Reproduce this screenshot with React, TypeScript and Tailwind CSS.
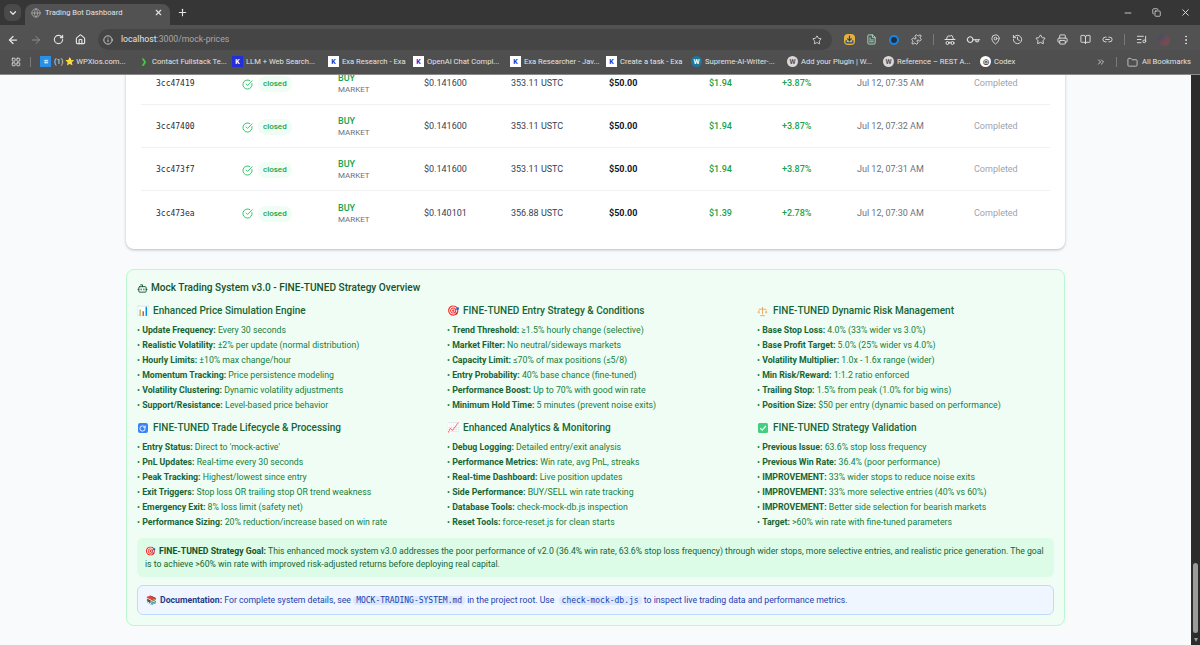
import type { ReactNode } from "react";
import { ArrowLeft, ArrowRight, RotateCw, Home, Info, Star, X, Plus, ChevronDown, Minus, Copy, LayoutGrid, Puzzle, Key, HatGlasses, MapPin, History, Printer, BookOpen, Link2, MoreVertical, ChevronsRight, Folder, CircleCheckBig, Bot, ListMusic, Globe, Download, FileText } from "lucide-react";

const trades = [
  { id: "3cc47419", price: "$0.141600", qty: "353.11 USTC", pnl: "$1.94", pct: "+3.87%", time: "Jul 12, 07:35 AM" },
  { id: "3cc47400", price: "$0.141600", qty: "353.11 USTC", pnl: "$1.94", pct: "+3.87%", time: "Jul 12, 07:32 AM" },
  { id: "3cc473f7", price: "$0.141600", qty: "353.11 USTC", pnl: "$1.94", pct: "+3.87%", time: "Jul 12, 07:31 AM" },
  { id: "3cc473ea", price: "$0.140101", qty: "356.88 USTC", pnl: "$1.39", pct: "+2.78%", time: "Jul 12, 07:30 AM" },
];

function ScaleIcon() {
  return (
    <svg viewBox="0 0 12 12" className="inline-block h-[11px] w-[11px] align-[-1px]">
      <path d="M6 1v8M3.5 10.5h5M2 3.5h8" stroke="#e8a55c" strokeWidth="1" fill="none" />
      <path d="M0.5 7 2 3.5 3.5 7a1.5 1.2 0 0 1-3 0ZM8.5 7 10 3.5 11.5 7a1.5 1.2 0 0 1-3 0Z" fill="#f3c48e" />
    </svg>
  );
}

function RefreshIcon() {
  return (
    <span className="inline-flex h-[10px] w-[10px] items-center justify-center rounded-[2px] bg-[#3b82f6] align-[-1px] text-white">
      <RotateCw size={7} strokeWidth={3} />
    </span>
  );
}

function CheckIcon() {
  return (
    <svg viewBox="0 0 10 10" className="inline-block h-[10px] w-[10px] align-[-1px]">
      <rect width="10" height="10" rx="1.5" fill="#3fcf7f" />
      <path d="M2.2 5.2 4.2 7.2 7.8 3" stroke="#fff" strokeWidth="1.2" fill="none" />
    </svg>
  );
}

const sections: { icon: ReactNode; title: string; items: string[][] }[] = [
  {
    icon: "📊",
    title: "Enhanced Price Simulation Engine",
    items: [
      ["Update Frequency:", "Every 30 seconds"],
      ["Realistic Volatility:", "±2% per update (normal distribution)"],
      ["Hourly Limits:", "±10% max change/hour"],
      ["Momentum Tracking:", "Price persistence modeling"],
      ["Volatility Clustering:", "Dynamic volatility adjustments"],
      ["Support/Resistance:", "Level-based price behavior"],
    ],
  },
  {
    icon: "🎯",
    title: "FINE-TUNED Entry Strategy & Conditions",
    items: [
      ["Trend Threshold:", "≥1.5% hourly change (selective)"],
      ["Market Filter:", "No neutral/sideways markets"],
      ["Capacity Limit:", "≤70% of max positions (≤5/8)"],
      ["Entry Probability:", "40% base chance (fine-tuned)"],
      ["Performance Boost:", "Up to 70% with good win rate"],
      ["Minimum Hold Time:", "5 minutes (prevent noise exits)"],
    ],
  },
  {
    icon: <ScaleIcon />,
    title: "FINE-TUNED Dynamic Risk Management",
    items: [
      ["Base Stop Loss:", "4.0% (33% wider vs 3.0%)"],
      ["Base Profit Target:", "5.0% (25% wider vs 4.0%)"],
      ["Volatility Multiplier:", "1.0x - 1.6x range (wider)"],
      ["Min Risk/Reward:", "1:1.2 ratio enforced"],
      ["Trailing Stop:", "1.5% from peak (1.0% for big wins)"],
      ["Position Size:", "$50 per entry (dynamic based on performance)"],
    ],
  },
  {
    icon: <RefreshIcon />,
    title: "FINE-TUNED Trade Lifecycle & Processing",
    items: [
      ["Entry Status:", "Direct to 'mock-active'"],
      ["PnL Updates:", "Real-time every 30 seconds"],
      ["Peak Tracking:", "Highest/lowest since entry"],
      ["Exit Triggers:", "Stop loss OR trailing stop OR trend weakness"],
      ["Emergency Exit:", "8% loss limit (safety net)"],
      ["Performance Sizing:", "20% reduction/increase based on win rate"],
    ],
  },
  {
    icon: "📈",
    title: "Enhanced Analytics & Monitoring",
    items: [
      ["Debug Logging:", "Detailed entry/exit analysis"],
      ["Performance Metrics:", "Win rate, avg PnL, streaks"],
      ["Real-time Dashboard:", "Live position updates"],
      ["Side Performance:", "BUY/SELL win rate tracking"],
      ["Database Tools:", "check-mock-db.js inspection"],
      ["Reset Tools:", "force-reset.js for clean starts"],
    ],
  },
  {
    icon: <CheckIcon />,
    title: "FINE-TUNED Strategy Validation",
    items: [
      ["Previous Issue:", "63.6% stop loss frequency"],
      ["Previous Win Rate:", "36.4% (poor performance)"],
      ["IMPROVEMENT:", "33% wider stops to reduce noise exits"],
      ["IMPROVEMENT:", "33% more selective entries (40% vs 60%)"],
      ["IMPROVEMENT:", "Better side selection for bearish markets"],
      ["Target:", ">60% win rate with fine-tuned parameters"],
    ],
  },
];

const bookmarks = [
  { label: "(1) ⭐ WPXios.com...", width: "w-[98px]", box: "bg-[#2b8fe8] text-white", mark: "⌗" },
  { label: "Contact Fullstack Te...", width: "w-[94px]", box: "text-[#3ecf3e]", mark: "❯" },
  { label: "LLM + Web Search...", width: "w-[96px]", box: "bg-[#2230d8] text-white", mark: "K" },
  { label: "Exa Research - Exa", width: "w-[85px]", box: "bg-white text-[#2230d8]", mark: "K" },
  { label: "OpenAI Chat Compl...", width: "w-[97px]", box: "bg-white text-[#2230d8]", mark: "K" },
  { label: "Exa Researcher - Jav...", width: "w-[96px]", box: "bg-white text-[#2230d8]", mark: "K" },
  { label: "Create a task - Exa", width: "w-[85px]", box: "bg-white text-[#2230d8]", mark: "K" },
  { label: "Supreme-AI-Writer-...", width: "w-[96px]", box: "bg-[#21759b] text-white rounded-full", mark: "W" },
  { label: "Add your Plugin | W...", width: "w-[96px]", box: "bg-[#d8d8d8] text-[#555] rounded-full", mark: "W" },
  { label: "Reference – REST A...", width: "w-[97px]", box: "bg-[#d8d8d8] text-[#555] rounded-full", mark: "W" },
  { label: "Codex", width: "w-[40px]", box: "bg-white text-[#333] rounded-full", mark: "◎" },
];

function ToolIcon({ children, className = "" }: { children: ReactNode; className?: string }) {
  return <div className={`flex w-[22.5px] shrink-0 items-center justify-center ${className}`}>{children}</div>;
}

function BrowserChrome() {
  return (
    <div className="relative z-10 h-[75px] shrink-0 border-b border-[#8a8a8a] bg-[#363636] text-[#e3e3e3]">
      <div className="flex h-[25px] items-end pl-1">
        <div className="mb-[4px] flex h-[17px] w-[17px] items-center justify-center rounded-md bg-[#4a4a4a]">
          <ChevronDown size={10} strokeWidth={3} />
        </div>
        <div className="ml-[4px] flex h-[21px] w-[145px] items-center rounded-t-lg bg-[#525252] pb-[4px] pl-[6px] pr-[7px] text-[7.6px]">
          <Globe size={10} className="text-[#aaaaaa]" />
          <span className="ml-[4px]">Trading Bot Dashboard</span>
          <X size={9} strokeWidth={3} className="ml-auto" />
        </div>
        <Plus size={11} strokeWidth={2.5} className="mb-[7px] ml-[7px]" />
        <div className="ml-auto mr-[9px] mb-[7px] flex items-center gap-[19px]">
          <Minus size={10} />
          <Copy size={9} />
          <X size={11} />
        </div>
      </div>
      <div className="flex h-[25px] items-center bg-[#525252] pt-[4px] pl-[2px]">
        <ToolIcon><ArrowLeft size={12} strokeWidth={2.5} /></ToolIcon>
        <ToolIcon><ArrowRight size={12} className="text-[#8e8e8e]" /></ToolIcon>
        <ToolIcon><RotateCw size={11} strokeWidth={2.5} /></ToolIcon>
        <ToolIcon><Home size={11} strokeWidth={2.5} /></ToolIcon>
        <div className="ml-[6px] flex h-[21px] w-[734px] shrink-0 items-center rounded-full bg-[#454545] pl-[5px] pr-[10px] text-[8.7px]">
          <Info size={10} />
          <span className="ml-[8px]">localhost</span>
          <span className="text-[#a8a8a8]">:3000/mock-prices</span>
          <Star size={10} className="ml-auto" />
        </div>
        <ToolIcon className="ml-[6px]">
          <span className="flex h-[11px] w-[11px] items-center justify-center rounded-sm bg-[#e8b03a] text-[#14477e]">
            <Download size={9} strokeWidth={3} />
          </span>
        </ToolIcon>
        <ToolIcon><FileText size={11} className="text-[#a8e0c8]" /></ToolIcon>
        <ToolIcon><span className="h-[10px] w-[10px] rounded-full border-2 border-[#1a86e0] bg-[#1e2f4a]" /></ToolIcon>
        <ToolIcon><Puzzle size={11} /></ToolIcon>
        <div className="ml-[5px] h-[11px] w-px shrink-0 bg-[#7a7a7a]" />
        <div className="ml-[5px] flex">
          <ToolIcon><HatGlasses size={12} /></ToolIcon>
          <ToolIcon><Key size={12} className="rotate-45" /></ToolIcon>
          <ToolIcon><MapPin size={11} /></ToolIcon>
          <ToolIcon><History size={11} /></ToolIcon>
          <ToolIcon><Star size={11} /></ToolIcon>
          <ToolIcon><Printer size={11} /></ToolIcon>
          <ToolIcon><BookOpen size={11} /></ToolIcon>
          <ToolIcon><Link2 size={11} /></ToolIcon>
        </div>
        <div className="ml-[5px] h-[11px] w-px shrink-0 bg-[#7a7a7a]" />
        <ToolIcon className="ml-[5px]"><ListMusic size={11} /></ToolIcon>
        <ToolIcon><span className="h-[12px] w-[12px] rounded-full bg-gradient-to-br from-[#3a4a6a] to-[#8a4a40]" /></ToolIcon>
        <ToolIcon><MoreVertical size={12} /></ToolIcon>
      </div>
      <div className="flex h-[24px] items-center bg-[#4f4f4f] pl-[11px] pr-[9px] text-[7.6px]">
        <LayoutGrid size={10} />
        <div className="ml-[9px] mr-[9px] h-[10px] w-px bg-[#7a7a7a]" />
        <div className="flex items-center">
          {bookmarks.map((b, i) => (
            <div key={i} className={`flex items-center gap-[3px] whitespace-nowrap ${b.width}`}>
              <span className={`flex h-[11px] w-[11px] shrink-0 items-center justify-center text-[7px] font-bold ${b.box}`}>{b.mark}</span>
              <span>{b.label}</span>
            </div>
          ))}
        </div>
        <ChevronsRight size={10} className="ml-auto" />
        <div className="ml-[10px] mr-[10px] h-[10px] w-px bg-[#7a7a7a]" />
        <Folder size={11} className="text-[#c8c8c8]" />
        <span className="ml-[4px] whitespace-nowrap">All Bookmarks</span>
      </div>
    </div>
  );
}

function TradeRow({ t, index }: { t: (typeof trades)[number]; index: number }) {
  return (
    <div className={`grid h-[43px] grid-cols-[86px_96px_86px_87px_98px_100px_73px_75px_117px_auto] items-center pt-[2px] pl-[15px] text-[9px] ${index === 3 ? "" : "border-b border-[#f0f1f3]"}`}>
      <span className="font-['DejaVu_Sans_Mono',monospace] text-[8px] text-[#1f2937]">{t.id}</span>
      <div className="flex items-center">
        <CircleCheckBig size={11} className="text-[#22c55e]" />
        <span className="ml-[5px] rounded-full bg-[#f0fdf4] px-[5px] py-[2px] text-[8px] font-medium text-[#16a34a]">closed</span>
      </div>
      <div className="leading-[12px]">
        <div className="font-medium text-[#16a34a]">BUY</div>
        <div className="text-[8px] text-[#6b7280]">MARKET</div>
      </div>
      <span className="text-[#374151]">{t.price}</span>
      <span className="text-[#374151]">{t.qty}</span>
      <span className="font-bold text-[#111827]">$50.00</span>
      <span className="font-medium text-[#16a34a]">{t.pnl}</span>
      <span className="font-medium text-[#16a34a]">{t.pct}</span>
      <span className="text-[#6b7280]">{t.time}</span>
      <span className="text-[#9ca3af]">Completed</span>
    </div>
  );
}

export default function App() {
  return (
    <div className="flex h-[645px] w-[1200px] flex-col overflow-hidden bg-[#f9fafb] font-['Roboto','Noto_Sans',sans-serif]">
      <BrowserChrome />
      <div className="flex min-h-0 flex-1">
        <main className="min-w-0 flex-1 overflow-hidden pl-[126px] pr-[126px]">
          <div className="-mt-[13px] h-[187px] rounded-b-lg bg-white px-[15px] shadow-[0_1px_3px_rgba(0,0,0,0.25)]">
            {trades.map((t, i) => (
              <TradeRow key={t.id} t={t} index={i} />
            ))}
          </div>

          <section className="mt-[20px] rounded-lg border border-[#bbf7d0] bg-[#f0fdf4] px-[10px] pt-[11px] pb-[10px]">
            <h3 className="flex items-center text-[10.1px] leading-[14px] font-medium text-[#14532d]">
              <Bot size={11} className="mr-[3px]" />
              Mock Trading System v3.0 - FINE-TUNED Strategy Overview
            </h3>
            <div className="mt-[9px] grid grid-cols-3 gap-x-[13px] gap-y-[8px]">
              {sections.map((s) => (
                <div key={s.title}>
                  <h4 className="flex items-center text-[10px] leading-[14px] font-medium text-[#166534]">
                    <span className="mr-[5px] flex w-[11px] justify-center text-[10px]">{s.icon}</span>
                    {s.title}
                  </h4>
                  <ul className="mt-[5px] text-[8.75px] leading-[15px] text-[#15803d]">
                    {s.items.map(([k, v], i) => (
                      <li key={i} className="whitespace-nowrap">
                        • <strong className="font-bold text-[#166534]">{k}</strong> {v}
                      </li>
                    ))}
                  </ul>
                </div>
              ))}
            </div>

            <div className="mt-[8px] rounded-md bg-[#dcfce7] px-[8px] py-[6.5px] text-[8.7px] leading-[13px] text-[#166534]">
              <span className="mr-[3px]">🎯</span>
              <strong className="font-bold text-[#14532d]">FINE-TUNED Strategy Goal:</strong> This enhanced mock system v3.0 addresses the poor performance of v2.0 (36.4% win rate, 63.6% stop loss frequency) through wider stops, more selective entries, and realistic price generation. The goal is to achieve &gt;60% win rate with improved risk-adjusted returns before deploying real capital.
            </div>

            <div className="mt-[8px] rounded-md border border-[#bfdbfe] bg-[#eff6ff] px-[8px] py-[6.5px] text-[8.7px] leading-[14px] text-[#1e40af]">
              <span className="mr-[3px]">📚</span>
              <strong className="font-bold text-[#1e3a8a]">Documentation:</strong> For complete system details, see{" "}
              <code className="rounded-sm bg-[#dbeafe] px-[3px] font-['DejaVu_Sans_Mono',monospace] text-[8px]">MOCK-TRADING-SYSTEM.md</code> in the project root. Use{" "}
              <code className="ml-[2px] rounded-sm bg-[#dbeafe] px-[3px] font-['DejaVu_Sans_Mono',monospace] text-[8px]">check-mock-db.js</code> to inspect live trading data and performance metrics.
            </div>
          </section>
        </main>
        <div className="relative w-[9px] shrink-0 bg-[#2c2c2c]">
          <div className="absolute top-[488px] left-[2px] h-[70px] w-[5px] rounded-full bg-[#9b9b9b]" />
          <div className="absolute top-[563px] left-[2.5px] h-0 w-0 border-x-[2px] border-t-[4px] border-x-transparent border-t-[#9b9b9b]" />
        </div>
      </div>
    </div>
  );
}
